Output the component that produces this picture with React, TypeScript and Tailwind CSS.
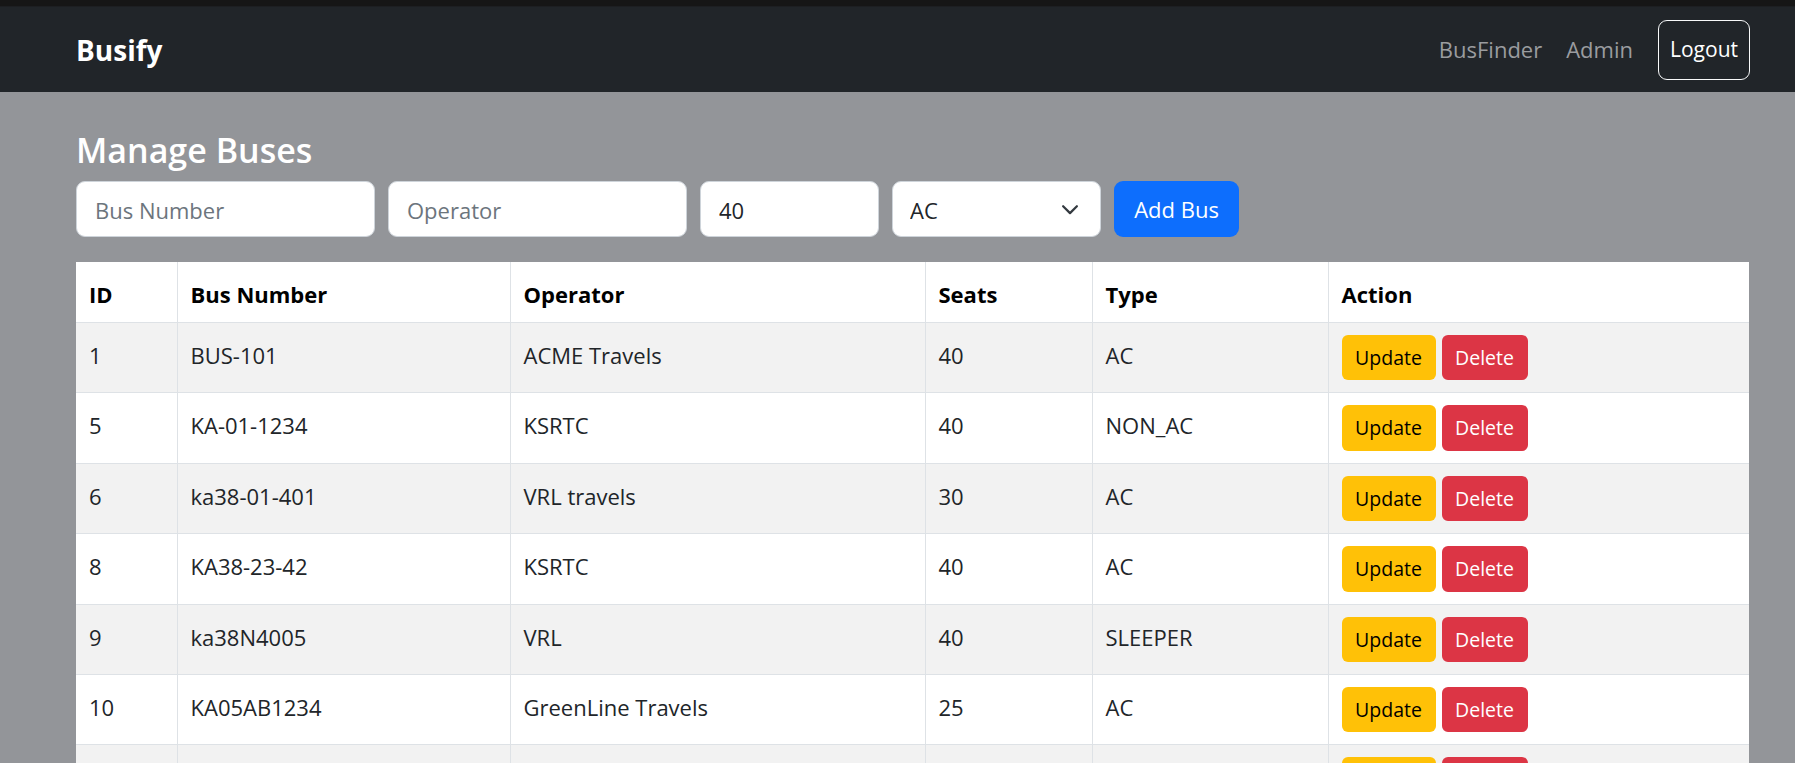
import React from 'react';

type Bus = {
    id: number;
    busNumber: string;
    operator: string;
    seats: number;
    type: string;
};

const buses: Bus[] = [
    { id: 1, busNumber: 'BUS-101', operator: 'ACME Travels', seats: 40, type: 'AC' },
    { id: 5, busNumber: 'KA-01-1234', operator: 'KSRTC', seats: 40, type: 'NON_AC' },
    { id: 6, busNumber: 'ka38-01-401', operator: 'VRL travels', seats: 30, type: 'AC' },
    { id: 8, busNumber: 'KA38-23-42', operator: 'KSRTC', seats: 40, type: 'AC' },
    { id: 9, busNumber: 'ka38N4005', operator: 'VRL', seats: 40, type: 'SLEEPER' },
    { id: 10, busNumber: 'KA05AB1234', operator: 'GreenLine Travels', seats: 25, type: 'AC' },
    { id: 11, busNumber: 'KA19F7788', operator: 'SRS Travels', seats: 36, type: 'NON_AC' },
];

const columns = [
    { label: 'ID', width: 'w-[101px]' },
    { label: 'Bus Number', width: 'w-[333px]' },
    { label: 'Operator', width: 'w-[415px]' },
    { label: 'Seats', width: 'w-[167px]' },
    { label: 'Type', width: 'w-[236px]' },
    { label: 'Action', width: 'w-[421px]' },
];

export default function App() {
    return (
        <div className="min-h-screen bg-[#939599] font-['Open_Sans','Noto_Sans',sans-serif] text-[#212529]">
            <div className="h-[7px] bg-[#161616] border-b border-[#1d1f22]" />

            {/* Navbar */}
            <nav className="h-[85px] bg-[#212529] flex items-center pl-[76px] pr-[45px]">
                <span className="text-white font-bold text-[28px] leading-none">Busify</span>
                <div className="ml-auto flex items-center">
                    <a className="px-[12px] text-[22px] text-[#9a9c9f] cursor-pointer">BusFinder</a>
                    <a className="px-[12px] text-[22px] text-[#9a9c9f] cursor-pointer">Admin</a>
                    <button className="ml-[13px] w-[92px] h-[60px] rounded-[9px] border border-[#f8f9fa] text-white text-[21px]">
                        Logout
                    </button>
                </div>
            </nav>

            <main className="pl-[76px] pr-[45px] pt-[35px]">
                <h2 className="text-white text-[34px] font-semibold leading-[46px] mb-[8px]">Manage Buses</h2>

                {/* Add bus form */}
                <div className="flex gap-[13px]">
                    <input
                        placeholder="Bus Number"
                        className="w-[299px] h-[56px] bg-white rounded-[9px] border border-[#ced4da] px-[18px] pt-[2px] text-[22px] placeholder:text-[#6c757d] outline-none"
                    />
                    <input
                        placeholder="Operator"
                        className="w-[299px] h-[56px] bg-white rounded-[9px] border border-[#ced4da] px-[18px] pt-[2px] text-[22px] placeholder:text-[#6c757d] outline-none"
                    />
                    <input
                        defaultValue="40"
                        className="w-[179px] h-[56px] bg-white rounded-[9px] border border-[#ced4da] px-[18px] pt-[2px] text-[22px] outline-none"
                    />
                    <div className="relative w-[209px] h-[56px]">
                        <select
                            defaultValue="AC"
                            className="appearance-none w-full h-full bg-white rounded-[9px] border border-[#ced4da] pl-[17px] pr-[50px] pt-[2px] text-[22px] outline-none"
                        >
                            <option value="AC">AC</option>
                            <option value="NON_AC">NON_AC</option>
                            <option value="SLEEPER">SLEEPER</option>
                        </select>
                        <svg
                            className="absolute right-[21px] top-[19px] pointer-events-none"
                            width="20"
                            height="20"
                            viewBox="0 0 16 16"
                            fill="none"
                            stroke="#343a40"
                            strokeWidth="1.8"
                            strokeLinecap="round"
                            strokeLinejoin="round"
                        >
                            <path d="m2.5 5 5.5 5.5 5.5-5.5" />
                        </svg>
                    </div>
                    <button className="w-[125px] h-[56px] rounded-[9px] bg-[#0d6efd] text-white text-[22px]">
                        Add Bus
                    </button>
                </div>

                {/* Bus table */}
                <table className="mt-[25px] w-[1673px] table-fixed border-collapse">
                    <thead>
                        <tr className="bg-white">
                            {columns.map((col, i) => (
                                <th
                                    key={col.label}
                                    className={`${col.width} text-left align-top font-bold text-black text-[22px] leading-[36px] pl-[13px] pr-[12px] pt-[14px] pb-[10px] border-b border-[#dee2e6] ${i > 0 ? 'border-l' : ''}`}
                                >
                                    {col.label}
                                </th>
                            ))}
                        </tr>
                    </thead>
                    <tbody>
                        {buses.map((bus, idx) => (
                            <tr key={bus.id} className={idx % 2 === 0 ? 'bg-[#f2f2f2]' : 'bg-white'}>
                                <td className="align-top text-[22px] leading-[40px] pl-[13px] pr-[12px] py-[12px] border-b border-[#dee2e6]">{bus.id}</td>
                                <td className="align-top text-[22px] leading-[40px] pl-[13px] pr-[12px] py-[12px] border-b border-l border-[#dee2e6]">{bus.busNumber}</td>
                                <td className="align-top text-[22px] leading-[40px] pl-[13px] pr-[12px] py-[12px] border-b border-l border-[#dee2e6]">{bus.operator}</td>
                                <td className="align-top text-[22px] leading-[40px] pl-[13px] pr-[12px] py-[12px] border-b border-l border-[#dee2e6]">{bus.seats}</td>
                                <td className="align-top text-[22px] leading-[40px] pl-[13px] pr-[12px] py-[12px] border-b border-l border-[#dee2e6]">{bus.type}</td>
                                <td className="align-top pl-[13px] pr-[12px] py-[12px] border-b border-l border-[#dee2e6]">
                                    <div className="flex gap-[6px]">
                                        <button className="w-[94px] h-[45.4px] rounded-[6px] bg-[#ffc107] text-black text-[19.5px] flex items-center justify-center">
                                            Update
                                        </button>
                                        <button className="w-[86px] h-[45.4px] rounded-[6px] bg-[#dc3545] text-white text-[19.5px] flex items-center justify-center">
                                            Delete
                                        </button>
                                    </div>
                                </td>
                            </tr>
                        ))}
                    </tbody>
                </table>
            </main>
        </div>
    );
}
